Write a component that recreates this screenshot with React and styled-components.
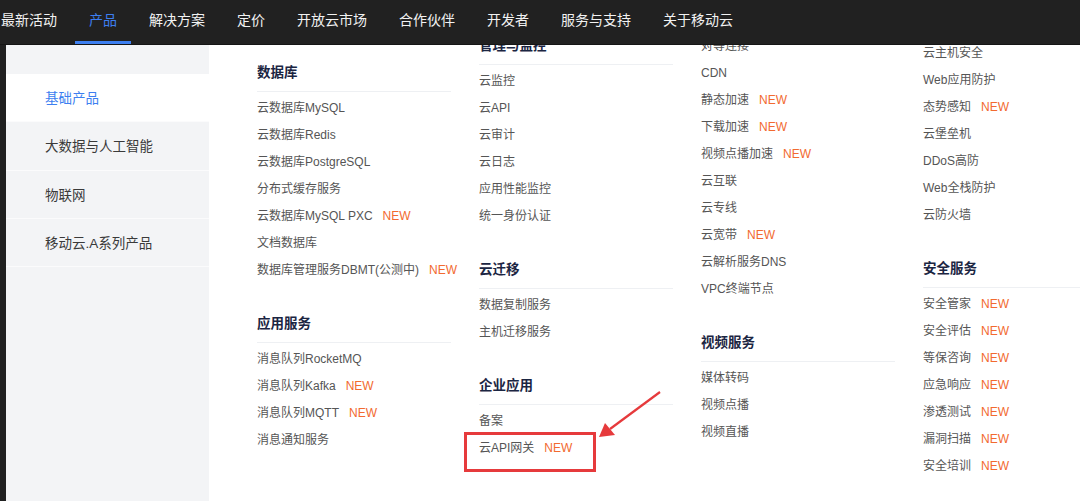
import styled, { createGlobalStyle } from "styled-components";

const GlobalStyle = createGlobalStyle`
  html, body {
    margin: 0;
    padding: 0;
    background: #202020;
  }
  body {
    font-family: "Liberation Sans", "Noto Sans CJK SC", sans-serif;
  }
`;

const navItems = [
  "最新活动",
  "产品",
  "解决方案",
  "定价",
  "开放云市场",
  "合作伙伴",
  "开发者",
  "服务与支持",
  "关于移动云",
];

const sideItems = ["基础产品", "大数据与人工智能", "物联网", "移动云.A系列产品"];

// shift : 列顶部相对面板的偏移（截图里各列滚动位置不同）
const columns = [
  {
    shift: 13.5,
    sections: [
      {
        title: "数据库",
        items: [
          ["云数据库MySQL"],
          ["云数据库Redis"],
          ["云数据库PostgreSQL"],
          ["分布式缓存服务"],
          ["云数据库MySQL PXC", true],
          ["文档数据库"],
          ["数据库管理服务DBMT(公测中)", true],
        ],
      },
      {
        title: "应用服务",
        items: [
          ["消息队列RocketMQ"],
          ["消息队列Kafka", true],
          ["消息队列MQTT", true],
          ["消息通知服务"],
        ],
      },
    ],
  },
  {
    shift: -13.5,
    sections: [
      {
        title: "管理与监控",
        items: [
          ["云监控"],
          ["云API"],
          ["云审计"],
          ["云日志"],
          ["应用性能监控"],
          ["统一身份认证"],
        ],
      },
      {
        title: "云迁移",
        items: [["数据复制服务"], ["主机迁移服务"]],
      },
      {
        title: "企业应用",
        items: [["备案"], ["云API网关", true]],
      },
    ],
  },
  {
    shift: -13.5,
    sections: [
      {
        items: [
          ["对等连接"],
          ["CDN"],
          ["静态加速", true],
          ["下载加速", true],
          ["视频点播加速", true],
          ["云互联"],
          ["云专线"],
          ["云宽带", true],
          ["云解析服务DNS"],
          ["VPC终端节点"],
        ],
      },
      {
        title: "视频服务",
        items: [["媒体转码"], ["视频点播"], ["视频直播"]],
      },
    ],
  },
  {
    shift: -6.5,
    sections: [
      {
        items: [
          ["云主机安全"],
          ["Web应用防护"],
          ["态势感知", true],
          ["云堡垒机"],
          ["DDoS高防"],
          ["Web全栈防护"],
          ["云防火墙"],
        ],
      },
      {
        title: "安全服务",
        items: [
          ["安全管家", true],
          ["安全评估", true],
          ["等保咨询", true],
          ["应急响应", true],
          ["渗透测试", true],
          ["漏洞扫描", true],
          ["安全培训", true],
        ],
      },
    ],
  },
];

const App = () => {
  return (
    <Page>
      <GlobalStyle />
      <TopBar>
        <NavList>
          {navItems.map((name) => (
            <NavItem key={name} className={name === "产品" ? "active" : undefined}>
              {name}
            </NavItem>
          ))}
        </NavList>
      </TopBar>

      <Dropdown>
        <Side>
          {sideItems.map((name, index) => (
            <SideItem key={name} className={index === 0 ? "active" : undefined}>
              {name}
            </SideItem>
          ))}
        </Side>

        <Panel>
          {columns.map((col, ci) => (
            <Column key={ci} $shift={col.shift}>
              {col.sections.map((sec, si) => (
                <Section key={si}>
                  {sec.title && <Heading>{sec.title}</Heading>}
                  {sec.items.map(([label, isNew]) => (
                    <Item key={label}>
                      {label}
                      {isNew && <New>NEW</New>}
                    </Item>
                  ))}
                </Section>
              ))}
            </Column>
          ))}
        </Panel>
      </Dropdown>

      {/* 截图上的标注：红框 + 箭头 */}
      <Annotation width="1080" height="501" viewBox="0 0 1080 501">
        <rect x="465.5" y="433.5" width="129" height="37" fill="none" stroke="#e63a3c" strokeWidth="3" />
        <line x1="660" y1="392" x2="610" y2="429" stroke="#e63a3c" strokeWidth="2.2" />
        <polygon points="599,437 605,423 615,435" fill="#e63a3c" />
      </Annotation>
    </Page>
  );
};

const Page = styled.div`
  position: relative;
  width: 1080px;
  height: 501px;
  overflow: hidden;
  background: #202020;
  display: flex;
  flex-direction: column;
`;

const TopBar = styled.div`
  height: 45px;
  flex-shrink: 0;
  background: #212121;
  border-bottom: 1px solid #151515;
  box-sizing: border-box;
`;

const NavList = styled.ul`
  display: flex;
  gap: 4px;
  margin: 0 0 0 -13px;
  padding: 0;
  list-style: none;
`;

const NavItem = styled.li`
  height: 44px;
  box-sizing: border-box;
  padding: 0 14px;
  line-height: 41px;
  border-bottom: 3px solid transparent;
  font-size: 14px;
  color: #f2f2f2;
  white-space: nowrap;
  &.active {
    color: #3d7ff0;
    border-bottom-color: #3d7ff0;
  }
`;

const Dropdown = styled.div`
  flex: 1;
  display: flex;
  margin-left: 6px;
  min-height: 0;
`;

const Side = styled.div`
  width: 203px;
  flex-shrink: 0;
  padding-top: 29px;
  background: #f3f4f6;
`;

const SideItem = styled.div`
  height: 48.3px;
  box-sizing: border-box;
  padding-left: 39px;
  line-height: 49px;
  border-bottom: 1px solid #fbfbfc;
  font-size: 13.5px;
  color: #3a3a3a;
  &.active {
    background: #fff;
    color: #3d7ff0;
  }
`;

const Panel = styled.div`
  flex: 1;
  display: flex;
  align-items: flex-start;
  gap: 28px;
  padding-left: 48px;
  background: #fff;
  overflow: hidden;
`;

const Column = styled.div`
  width: 194px;
  flex-shrink: 0;
  margin-top: ${(p) => p.$shift}px;
`;

const Section = styled.div`
  & + & {
    margin-top: 27px;
  }
`;

const Heading = styled.h3`
  margin: 0 0 2px;
  height: 33px;
  box-sizing: border-box;
  line-height: 27px;
  border-bottom: 1px solid #eef0f3;
  font-size: 13.5px;
  font-weight: bold;
  color: #1b2542;
`;

const Item = styled.div`
  height: 26px;
  padding-top: 1px;
  line-height: 27px;
  font-size: 12px;
  color: #555;
  white-space: nowrap;
`;

const New = styled.span`
  margin-left: 10px;
  color: #f26a30;
`;

const Annotation = styled.svg`
  position: absolute;
  left: 0;
  top: 0;
  pointer-events: none;
`;

export default App;
